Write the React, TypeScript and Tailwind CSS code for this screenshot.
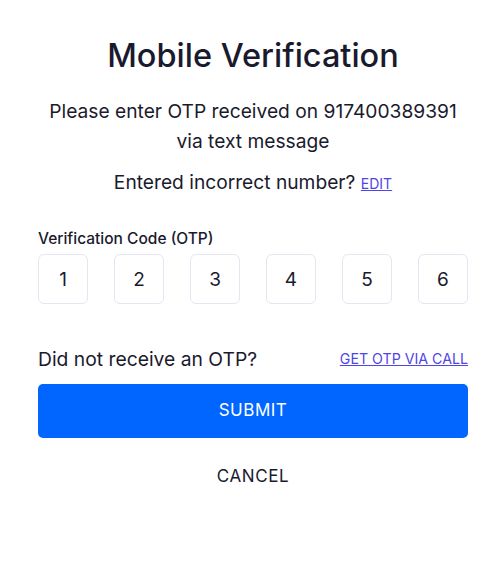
import React, { useState } from 'react';

const initialDigits = ['1', '2', '3', '4', '5', '6'];

const App: React.FC = () => {
  const [digits, setDigits] = useState<string[]>(initialDigits);

  const handleChange = (index: number, value: string) => {
    const next = [...digits];
    next[index] = value.slice(-1);
    setDigits(next);
  };

  return (
    <div
      className="min-h-screen bg-white text-[#1a1a2e]"
      style={{ fontFamily: 'Inter, "Noto Sans", sans-serif' }}
    >
      <div className="pl-[38px] pr-[21px] pt-[36px]">
        {/* Header */}
        <h1 className="text-center text-[32.5px] font-medium leading-[40px]">
          Mobile Verification
        </h1>

        <p className="mt-[20px] text-center text-[19.2px] leading-[30px]">
          Please enter OTP received on 917400389391
          <br />
          via text message
        </p>

        <p className="mt-[11px] text-center text-[19.2px] leading-[30px]">
          Entered incorrect number?{' '}
          <a href="#" className="text-[14px] text-[#4f46e5] underline">
            EDIT
          </a>
        </p>

        {/* OTP inputs */}
        <div className="mt-[30px]">
          <label className="block text-[15.5px] font-medium leading-[20px]">
            Verification Code (OTP)
          </label>
          <div className="mt-[5px] flex justify-between">
            {digits.map((d, i) => (
              <input
                key={i}
                value={d}
                onChange={e => handleChange(i, e.target.value)}
                className="h-[50px] w-[50px] rounded-[6px] border border-[#e4e6f0] text-center text-[19px] outline-none"
              />
            ))}
          </div>
        </div>

        {/* Resend */}
        <div className="mt-[40px] flex items-center justify-between">
          <span className="text-[19.3px] leading-[30px]">Did not receive an OTP?</span>
          <a href="#" className="text-[14.2px] text-[#4f46e5] underline">
            GET OTP VIA CALL
          </a>
        </div>

        <button className="mt-[10px] h-[54px] w-full rounded-[5px] bg-[#0066ff] text-[17px] tracking-[0.5px] text-white">
          SUBMIT
        </button>

        <button className="mt-[26px] block w-full text-center text-[17px] tracking-[0.6px]">
          CANCEL
        </button>
      </div>
    </div>
  );
};

export default App;
